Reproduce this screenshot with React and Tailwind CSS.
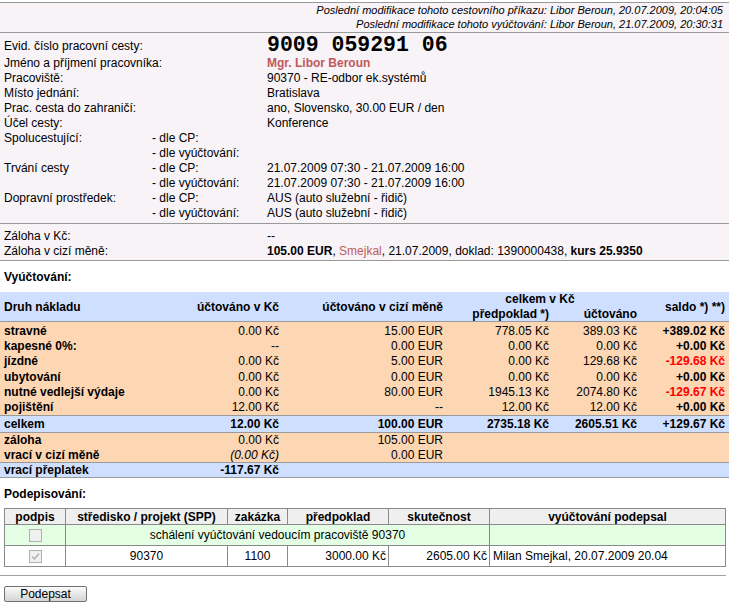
import React from "react";

const info = [
  ["Jméno a příjmení pracovníka:", "", <span className="font-bold text-[#c05a5a]">Mgr. Libor Beroun</span>],
  ["Pracoviště:", "", "90370 - RE-odbor ek.systémů"],
  ["Místo jednání:", "", "Bratislava"],
  ["Prac. cesta do zahraničí:", "", "ano, Slovensko, 30.00 EUR / den"],
  ["Účel cesty:", "", "Konference"],
  ["Spolucestující:", "- dle CP:", ""],
  ["", "- dle vyúčtování:", ""],
  ["Trvání cesty", "- dle CP:", "21.07.2009 07:30 - 21.07.2009 16:00"],
  ["", "- dle vyúčtování:", "21.07.2009 07:30 - 21.07.2009 16:00"],
  ["Dopravní prostředek:", "- dle CP:", "AUS (auto služební - řidič)"],
  ["", "- dle vyúčtování:", "AUS (auto služební - řidič)"],
];

const costs = [
  ["stravné", "0.00 Kč", "15.00 EUR", "778.05 Kč", "389.03 Kč", "+389.02 Kč", false],
  ["kapesné 0%:", "--", "0.00 EUR", "0.00 Kč", "0.00 Kč", "+0.00 Kč", false],
  ["jízdné", "0.00 Kč", "5.00 EUR", "0.00 Kč", "129.68 Kč", "-129.68 Kč", true],
  ["ubytování", "0.00 Kč", "0.00 EUR", "0.00 Kč", "0.00 Kč", "+0.00 Kč", false],
  ["nutné vedlejší výdaje", "0.00 Kč", "80.00 EUR", "1945.13 Kč", "2074.80 Kč", "-129.67 Kč", true],
  ["pojištění", "12.00 Kč", "--", "12.00 Kč", "12.00 Kč", "+0.00 Kč", false],
];

const grid = "grid grid-cols-[171px_104px_164px_106px_88px_88px] px-[4px]";

function Checkbox({ checked }) {
  return (
    <div className="mx-auto w-[13px] h-[13px] border border-[#b0b0b0] bg-[#f0f0f0] flex items-center justify-center">
      {checked && (
        <svg width="9" height="9" viewBox="0 0 9 9">
          <path d="M1 4.5 L3.5 7 L8 1.5" fill="none" stroke="#b0b0b0" strokeWidth="1.4" />
        </svg>
      )}
    </div>
  );
}

export default function App() {
  return (
    <div className="w-[729px] min-h-[609px] bg-white text-black text-[12px] font-['Liberation_Sans',Arial,sans-serif]">
      {/* hlavička */}
      <div className="mt-[2px] border-t border-[#9a9a9a] bg-[#f7f3f7]">
        <div className="h-[29px] pr-[6px] text-right text-[11px] italic leading-[14px]">
          <div>Poslední modifikace tohoto cestovního příkazu: Libor Beroun, 20.07.2009, 20:04:05</div>
          <div>Poslední modifikace tohoto vyúčtování: Libor Beroun, 21.07.2009, 20:30:31</div>
        </div>

        <div className="border-t border-[#9a9a9a] px-[4px] pb-[2px]">
          <div className="flex items-center h-[23px] pt-[2px]">
            <div className="w-[263px] shrink-0">Evid. číslo pracovní cesty:</div>
            <div className="font-['Liberation_Mono',monospace] font-bold text-[21.5px] leading-[23px] whitespace-pre">
              9009 059291 06
            </div>
          </div>
          {info.map(([a, b, c], i) => (
            <div key={i} className="flex h-[15px] leading-[15px] whitespace-nowrap">
              <div className="w-[148px] shrink-0">{a}</div>
              <div className="w-[115px] shrink-0">{b}</div>
              <div>{c}</div>
            </div>
          ))}
        </div>

        <div className="border-t border-[#9a9a9a] px-[4px] pt-[5px] pb-px">
          <div className="flex h-[15px] leading-[15px]">
            <div className="w-[263px] shrink-0">Záloha v Kč:</div>
            <div>--</div>
          </div>
          <div className="flex h-[15px] leading-[15px] whitespace-nowrap">
            <div className="w-[263px] shrink-0">Záloha v cizí měně:</div>
            <div>
              <b>105.00 EUR</b>, <span className="text-[#c05a5a]">Smejkal</span>, 21.07.2009, doklad: 1390000438,{" "}
              <b>kurs 25.9350</b>
            </div>
          </div>
        </div>
      </div>

      {/* vyúčtování */}
      <div className="border-t border-[#9a9a9a]">
        <div className="mt-[9px] mb-[7px] px-[4px] font-bold leading-[15px]">Vyúčtování:</div>

        <div className={`${grid} bg-[#cfdfff] font-bold h-[30px] border-b border-[#9a9a9a] leading-[15px]`}>
          <div className="row-span-2 self-center">Druh nákladu</div>
          <div className="row-span-2 self-center text-right">účtováno v Kč</div>
          <div className="row-span-2 self-center text-right">účtováno v cizí měně</div>
          <div className="col-span-2 text-center">celkem v Kč</div>
          <div className="row-span-2 self-center text-right">saldo *) **)</div>
          <div className="text-right">předpoklad *)</div>
          <div className="text-right">účtováno</div>
        </div>

        <div className="bg-[#fdd6b3] border-b border-[#9a9a9a] pt-[2px]">
          {costs.map(([n, a, b, c, d, s, neg]) => (
            <div key={n} className={`${grid} h-[15.2px] leading-[15.2px]`}>
              <div className="font-bold">{n}</div>
              <div className="text-right">{a}</div>
              <div className="text-right">{b}</div>
              <div className="text-right">{c}</div>
              <div className="text-right">{d}</div>
              <div className={`text-right font-bold ${neg ? "text-[#ff0000]" : ""}`}>{s}</div>
            </div>
          ))}
        </div>

        <div className={`${grid} bg-[#cfdfff] font-bold h-[17px] leading-[17px] border-b border-[#9a9a9a]`}>
          <div>celkem</div>
          <div className="text-right">12.00 Kč</div>
          <div className="text-right">100.00 EUR</div>
          <div className="text-right">2735.18 Kč</div>
          <div className="text-right">2605.51 Kč</div>
          <div className="text-right">+129.67 Kč</div>
        </div>

        <div className="bg-[#fdd6b3] border-b border-[#9a9a9a]">
          <div className={`${grid} h-[14.5px] leading-[15px]`}>
            <div className="font-bold">záloha</div>
            <div className="text-right">0.00 Kč</div>
            <div className="text-right">105.00 EUR</div>
          </div>
          <div className={`${grid} h-[14.5px] leading-[15px]`}>
            <div className="font-bold">vrací v cizí měně</div>
            <div className="text-right italic">(0.00 Kč)</div>
            <div className="text-right">0.00 EUR</div>
          </div>
        </div>

        <div className={`${grid} bg-[#cfdfff] font-bold h-[15px] leading-[15px] border-b border-[#9a9a9a]`}>
          <div>vrací přeplatek</div>
          <div className="text-right">-117.67 Kč</div>
        </div>
      </div>

      {/* podepisování */}
      <div className="mt-[9px] mb-[6px] px-[4px] font-bold leading-[15px]">Podepisování:</div>
      <table className="ml-[4px] w-[721px] border-collapse table-fixed">
        <colgroup>
          <col className="w-[61px]" />
          <col className="w-[162px]" />
          <col className="w-[60px]" />
          <col className="w-[101px]" />
          <col className="w-[101px]" />
          <col className="w-[236px]" />
        </colgroup>
        <thead>
          <tr className="bg-[#efefef] font-bold h-[16px] leading-[14px]">
            {["podpis", "středisko / projekt (SPP)", "zakázka", "předpoklad", "skutečnost", "vyúčtování podepsal"].map((h) => (
              <th key={h} className="border border-[#8a8a8a] p-0 font-bold text-center">{h}</th>
            ))}
          </tr>
        </thead>
        <tbody>
          <tr className="bg-[#e5ffe5] h-[21px]">
            <td className="border border-[#8a8a8a] p-0"><Checkbox /></td>
            <td colSpan={4} className="border border-[#8a8a8a] p-0 text-center">schálení vyúčtování vedoucím pracoviště 90370</td>
            <td className="border border-[#8a8a8a] p-0"></td>
          </tr>
          <tr className="h-[21px]">
            <td className="border border-[#8a8a8a] p-0"><Checkbox checked /></td>
            <td className="border border-[#8a8a8a] p-0 text-center">90370</td>
            <td className="border border-[#8a8a8a] p-0 text-center">1100</td>
            <td className="border border-[#8a8a8a] py-0 px-[2px] text-right">3000.00 Kč</td>
            <td className="border border-[#8a8a8a] py-0 px-[2px] text-right">2605.00 Kč</td>
            <td className="border border-[#8a8a8a] py-0 px-[3px] text-left">Milan Smejkal, 20.07.2009 20.04</td>
          </tr>
        </tbody>
      </table>

      <div className="mt-[8px] w-[726px] border-t border-[#a0a0a0]"></div>
      <div className="pt-[9px] px-[4px]">
        <button className="w-[83px] h-[16px] leading-[14px] text-[12px] border border-[#707070] rounded-[2px] bg-gradient-to-b from-[#fbfbfb] to-[#d4d4d4] text-black">
          Podepsat
        </button>
      </div>
    </div>
  );
}
